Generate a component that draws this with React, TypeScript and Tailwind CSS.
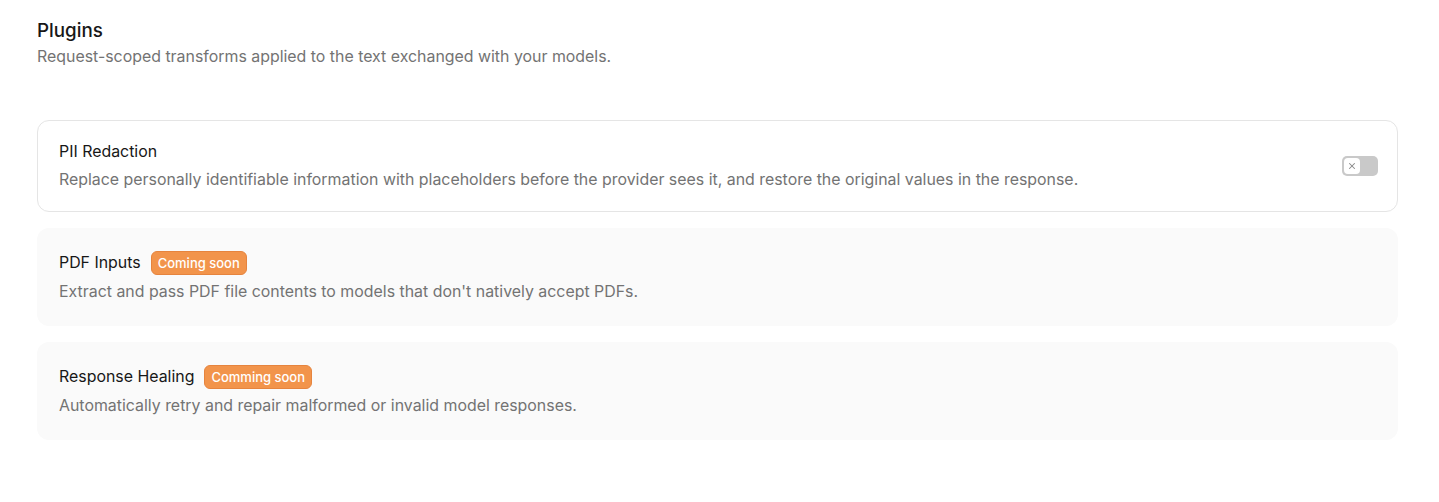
import { X } from 'lucide-react';

type Plugin = {
  name: string;
  description: string;
  badge?: string;
  enabled?: boolean;
};

const plugins: Plugin[] = [
  {
    name: 'PII Redaction',
    description:
      'Replace personally identifiable information with placeholders before the provider sees it, and restore the original values in the response.',
    enabled: false,
  },
  {
    name: 'PDF Inputs',
    description: "Extract and pass PDF file contents to models that don't natively accept PDFs.",
    badge: 'Coming soon',
  },
  {
    name: 'Response Healing',
    description: 'Automatically retry and repair malformed or invalid model responses.',
    badge: 'Comming soon',
  },
];

function Toggle() {
  return (
    <button className="flex h-5 w-9 shrink-0 items-center rounded-[5px] bg-[#c9c9c9] p-[2px]">
      <span className="flex h-4 w-4 items-center justify-center rounded-[4px] bg-white">
        <X className="h-2.5 w-2.5 text-[#8a8a8a]" strokeWidth={2.5} />
      </span>
    </button>
  );
}

export default function App() {
  return (
    <div className="min-h-screen bg-white pl-[37px] pr-[41px] pt-[17px] font-['Inter',sans-serif]">
      {/* Header */}
      <div>
        <h1 className="text-[18.8px] font-medium leading-7 text-[#171717]">Plugins</h1>
        <p className="mt-px text-[15.9px] leading-[22px] text-[#737373]">
          Request-scoped transforms applied to the text exchanged with your models.
        </p>
      </div>

      {/* Plugin list */}
      <div className="mt-[52px] flex flex-col gap-4">
        {plugins.map((plugin) =>
          plugin.badge ? (
            <div
              key={plugin.name}
              className="flex flex-col gap-1.5 rounded-xl border border-transparent bg-[#fafafa] px-[21px] pb-[22px] pt-[22px]"
            >
              <div className="flex items-center gap-2.5">
                <span className="text-[15.9px] leading-[22px] text-[#171717]">{plugin.name}</span>
                <span className="rounded-md border border-[#e6843e] bg-[#f2944b] px-[6px] py-[3px] text-[13px] font-medium leading-4 text-white">
                  {plugin.badge}
                </span>
              </div>
              <p className="text-[15.9px] leading-[22px] text-[#737373]">{plugin.description}</p>
            </div>
          ) : (
            <div
              key={plugin.name}
              className="flex items-center justify-between rounded-xl border border-[#e5e5e5] bg-white pb-5 pl-[21px] pr-[19px] pt-5"
            >
              <div className="flex flex-col gap-1.5">
                <span className="text-[15.9px] leading-[22px] text-[#171717]">{plugin.name}</span>
                <p className="text-[15.9px] leading-[22px] text-[#737373]">{plugin.description}</p>
              </div>
              <Toggle />
            </div>
          )
        )}
      </div>
    </div>
  );
}
